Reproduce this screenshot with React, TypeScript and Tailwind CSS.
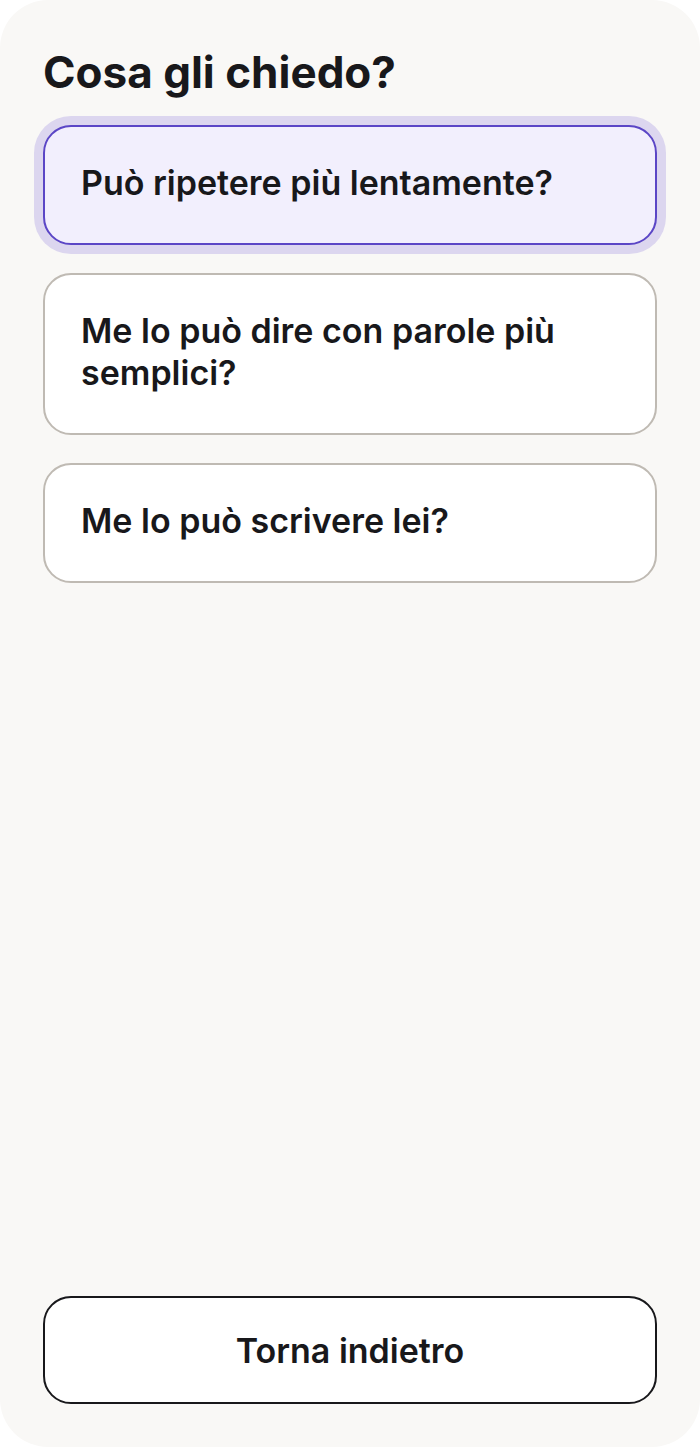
import React from "react";

export default function App() {
  const font = { fontFamily: "Inter, 'Noto Sans', sans-serif" };
  return (
    <div className="w-[700px] h-[1447px] bg-white" style={font}>
      <div className="h-full rounded-[48px] bg-[#f9f8f6] flex flex-col px-[43px] pt-[44px] pb-[43px]">
        <h1 className="text-[44px] leading-[56px] font-bold text-[#18181b]">
          Cosa gli chiedo?
        </h1>
        <div className="mt-[25px] flex flex-col gap-[28px]">
          <button className="text-left rounded-[28px] border-2 border-[#5b46c6] bg-[#f2effd] ring-[9px] ring-[#dcd6ef] px-[36px] pt-[35px] pb-[39px] text-[34px] leading-[42px] font-semibold text-[#18181b]">
            Può ripetere più lentamente?
          </button>
          <button className="text-left rounded-[28px] border-2 border-[#bfbab3] bg-white px-[36px] pt-[35px] pb-[39px] text-[34px] leading-[42px] font-semibold text-[#18181b]">
            Me lo può dire con parole più semplici?
          </button>
          <button className="text-left rounded-[28px] border-2 border-[#bfbab3] bg-white px-[36px] pt-[35px] pb-[39px] text-[34px] leading-[42px] font-semibold text-[#18181b]">
            Me lo può scrivere lei?
          </button>
        </div>
        <div className="flex-1" />
        <button className="h-[108px] rounded-[28px] border-2 border-[#18181b] bg-white text-[34px] font-semibold text-[#18181b]">
          Torna indietro
        </button>
      </div>
    </div>
  );
}
